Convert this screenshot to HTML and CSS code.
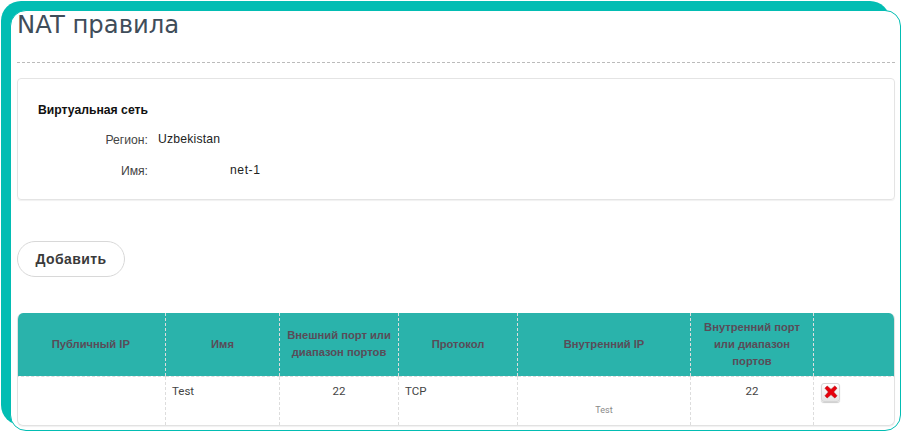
FILE: index.html
```html
<!DOCTYPE html>
<html lang="ru">
<head>
<meta charset="utf-8">
<title>NAT правила</title>
<link rel="stylesheet" href="styles.css">
</head>
<body>
<div class="backplate">
  <main class="card">
    <h1 class="title">NAT правила</h1>
    <section class="panel">
      <h2 class="panel-title">Виртуальная сеть</h2>
      <div class="field">
        <span class="field-label">Регион:</span>
        <span class="field-value">Uzbekistan</span>
      </div>
      <div class="field field-name">
        <span class="field-label">Имя:</span>
        <span class="field-value">net-1</span>
      </div>
    </section>
    <button class="add-btn" type="button">Добавить</button>
    <div class="table-wrap">
      <table class="rules">
        <colgroup>
          <col class="c1"><col class="c2"><col class="c3"><col class="c4"><col class="c5"><col class="c6"><col class="c7">
        </colgroup>
        <thead>
          <tr>
            <th>Публичный IP</th>
            <th>Имя</th>
            <th>Внешний порт или диапазон портов</th>
            <th>Протокол</th>
            <th>Внутренний IP</th>
            <th>Внутренний порт или диапазон портов</th>
            <th></th>
          </tr>
        </thead>
        <tbody>
          <tr>
            <td></td>
            <td>Test</td>
            <td class="center">22</td>
            <td>TCP</td>
            <td class="center"><small class="hint">Test</small></td>
            <td class="center">22</td>
            <td>
              <button class="del-btn" type="button" aria-label="Удалить">
                <svg width="14" height="14" viewBox="0 0 14 14"><path d="M1 3.2 3.2 1 7 4.4 10.8 1 13 3.2 9.6 7 13 10.8 10.8 13 7 9.6 3.2 13 1 10.8 4.4 7Z" fill="#e8000b" stroke="#b40008" stroke-width=".6"/></svg>
              </button>
            </td>
          </tr>
        </tbody>
      </table>
    </div>
  </main>
</div>
</body>
</html>
```
FILE: styles.css
```css
* { box-sizing: border-box; }
html, body { margin: 0; height: 100%; overflow: hidden; background: #fff; }
body { font-family: "Liberation Sans", Arial, sans-serif; color: #333; }

.backplate {
  width: 889px;
  height: 424px;
  margin: 1px 0 0 1px;
  padding: 9px 0 0 9px;
  background: #02bdb3;
  border-radius: 20px;
}
.card {
  width: 891px;
  height: 421px;
  padding: 0 5px 0 6px;
  background: #fff;
  border: 1px solid #02bdb3;
  border-radius: 16px;
  overflow: hidden;
}
.title {
  height: 52px;
  margin: 0 0 15px;
  border-bottom: 1px dashed #bbb;
  font: 400 24.3px/28px "DejaVu Sans", Verdana, sans-serif;
  color: #3f4d5a;
}
.panel {
  height: 122px;
  padding: 24px 20px 0;
  border: 1px solid #e4e4e4;
  border-radius: 4px;
  box-shadow: 0 1px 1px rgba(0,0,0,.06);
}
.panel-title {
  margin: 0 0 13px;
  font-size: 12.2px;
  line-height: 14px;
  font-weight: 700;
  color: #111;
}
.field { display: flex; align-items: center; height: 18px; font-size: 12.2px; margin-bottom: 13px; }
.field-label { width: 110px; text-align: right; color: #444; position: relative; top: 1px; }
.field-value { margin-left: 10px; font: 12.2px "Liberation Sans", sans-serif; letter-spacing: .2px; color: #222; }
.field-name .field-value { margin-left: 82px; letter-spacing: .55px; }
.add-btn {
  display: block;
  width: 108px;
  height: 36px;
  margin: 41px 0 36px;
  padding: 0;
  background: #fff;
  border: 1px solid #d8d8d8;
  border-radius: 18px;
  font: 700 14px "Liberation Sans", Arial, sans-serif;
  letter-spacing: .4px;
  color: #3a3a3a;
}
.table-wrap {
  width: 878px;
  height: 113px;
  border: 1px solid #e2e2e2;
  border-top: 0;
  border-radius: 6px;
  overflow: hidden;
  box-shadow: 0 1px 1px rgba(0,0,0,.06);
}
.rules { width: 879px; margin-left: -2px; table-layout: fixed; border-collapse: collapse; }
.c1 { width: 149px; } .c2 { width: 114px; } .c3 { width: 119px; } .c4 { width: 119px; }
.c5 { width: 173px; } .c6 { width: 123px; } .c7 { width: 82px; }
.rules th {
  height: 63px;
  padding: 0 4px;
  background: #2ab3ab;
  border-left: 1px dashed #ddd;
  border-bottom: 1px dashed #ddd;
  font-size: 11.2px;
  line-height: 17px;
  font-weight: 700;
  color: #594c58;
  text-align: center;
}
.rules th:first-child { border-left: 0; }
.rules td {
  height: 49px;
  padding: 7px 6px 0;
  border-left: 1px dashed #ddd;
  vertical-align: top;
  font: 11.5px/14px "Roboto", sans-serif;
  color: #444;
}
.rules .center { text-align: center; }
.hint { display: block; padding-top: 20px; font-size: 9px; line-height: 12px; color: #888; }
.del-btn {
  display: flex;
  align-items: center;
  justify-content: center;
  width: 19px;
  height: 19px;
  padding: 0;
  margin: -1px 0 0 1px;
  background: linear-gradient(#fff, #e4e4e4);
  border: 1px solid #d5d5d5;
  border-radius: 3px;
  box-shadow: 0 1px 1px rgba(0,0,0,.2);
}
```
